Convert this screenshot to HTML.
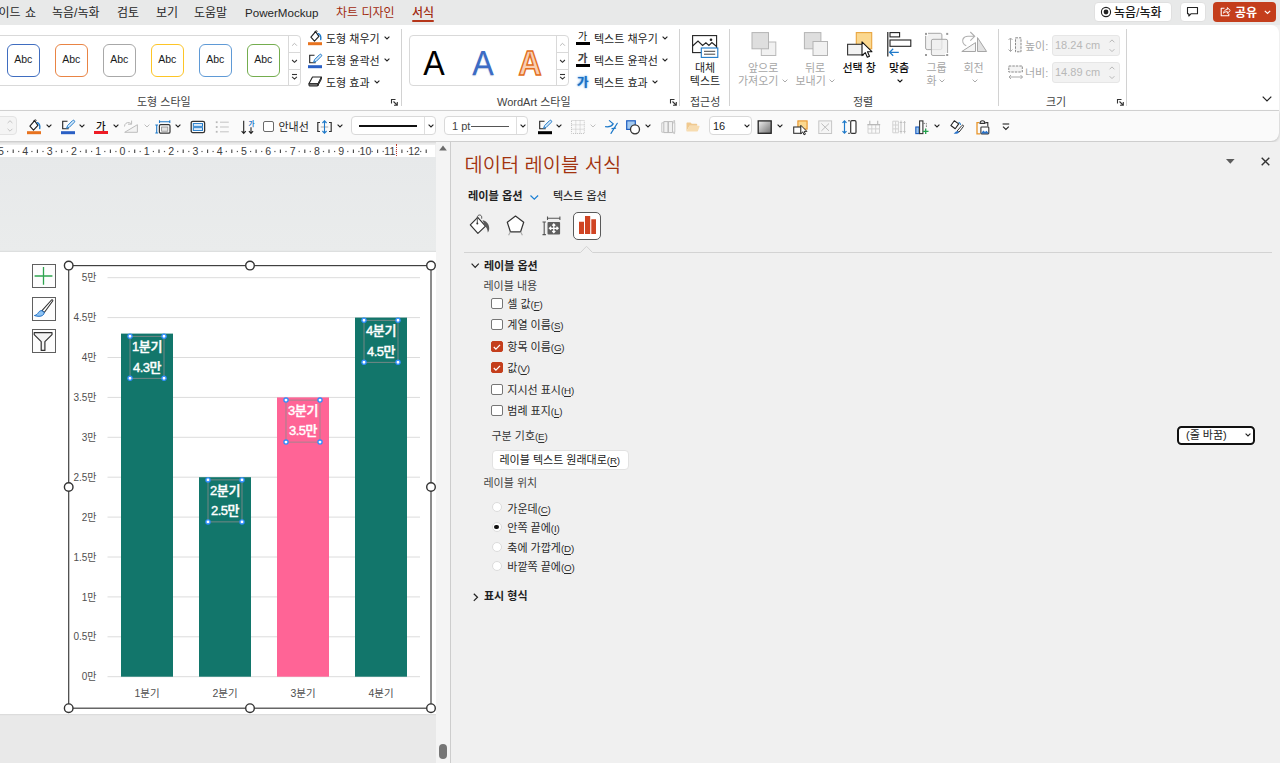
<!DOCTYPE html>
<html lang="ko">
<head>
<meta charset="utf-8">
<title>데이터 레이블 서식</title>
<style>
*{box-sizing:border-box}
html,body{margin:0;padding:0}
body{width:1280px;height:763px;overflow:hidden;position:relative;background:#f0f0f0;
 font-family:"Liberation Sans","Noto Sans CJK KR",sans-serif;font-size:12px;color:#242424;line-height:1}
.abs{position:absolute}
.t{position:absolute;white-space:nowrap;line-height:14px;height:14px}
svg{position:absolute;overflow:visible}
/* tab bar */
#tabs{position:absolute;left:0;top:0;width:1280px;height:25px;background:#e8e9e9}
#tabs .t{top:6px;font-size:12px;color:#262626}
/* ribbon */
#ribbon{position:absolute;left:-10px;top:25px;width:1289px;height:86px;background:#fff;border-radius:0 8px 0 0;border-bottom:1px solid #d6d6d6}
#qat{position:absolute;left:-10px;top:111px;width:1289px;height:30px;background:#fafafa;border-radius:0 0 8px 0;box-shadow:0 1px 3px rgba(0,0,0,.22)}
.sep{position:absolute;top:29px;width:1px;height:77px;background:#d2d2d2}
.glabel{position:absolute;top:95px;font-size:11px;color:#424242;white-space:nowrap;line-height:14px}
.rb{position:absolute;font-size:12px;color:#242424;white-space:nowrap;line-height:14px}
.dis{color:#a6a6a6}
.gal{position:absolute;top:35px;height:51px;background:#fff;border:1px solid #d9d9d9;border-radius:4px}
.abc{position:absolute;top:44px;width:32.500px;height:32.500px;border:1.500px solid;border-radius:6px;background:#fff;font-size:10.500px;text-align:center;line-height:29px;color:#1a1a1a}
/* qat */
.dd{position:absolute;top:116px;height:19px;background:#fff;border:1px solid #d9d9d9;border-radius:4px}
/* ruler */
#ruler{position:absolute;left:0;top:144.500px;width:435px;height:12.500px;background:#fff;overflow:hidden}
#ruler span{position:absolute;top:0;font-size:10.600px;line-height:12px;color:#404040;transform:translateX(-50%)}
/* slide area */
#work{position:absolute;left:0;top:157px;width:436px;height:606px;background:linear-gradient(#e7e9ea 0,#eaecec 95px,#e9e9e9 95px);overflow:hidden}
#slide{position:absolute;left:-10px;top:95px;width:456px;height:462px;background:#fff;box-shadow:0 0 2px rgba(0,0,0,.18)}
#vscroll{position:absolute;left:436px;top:142px;width:14px;height:621px;background:#f4f4f4}
/* pane */
#pane{position:absolute;left:450px;top:142px;width:830px;height:621px;background:#f0f0f0;border-left:1px solid #cdcdcd}
.pt{position:absolute;white-space:nowrap;font-size:11px;line-height:14px;height:14px;color:#2a2a2a}
.ak{font-size:9.800px;letter-spacing:-.2px}
.pt u{text-decoration-thickness:1px;text-underline-offset:1.5px}
.cb{position:absolute;left:491.300px;width:11.400px;height:11px;border:1px solid #767676;border-radius:2px;background:#fff}
.cb.on{background:#c43e1c;border-color:#c43e1c}
.rd{position:absolute;left:491.600px;width:10px;height:10px;border:1px solid #dcdcdc;border-radius:50%;background:#fff}
.ac{display:inline-block;border:1px solid #333;border-radius:50%;font-size:9px;line-height:10px;height:12px;min-width:11px;padding:0 1.5px;text-align:center;vertical-align:0px;margin:0 -0.5px}
</style>
</head>
<body>
<!-- ===== TAB BAR ===== -->
<div id="tabs">
 <div class="t" style="left:-1.500px;word-spacing:1px">이드 쇼</div>
 <div class="t" style="left:52px">녹음/녹화</div>
 <div class="t" style="left:117px">검토</div>
 <div class="t" style="left:156px">보기</div>
 <div class="t" style="left:194px">도움말</div>
 <div class="t" style="left:245px;font-size:11.6px">PowerMockup</div>
 <div class="t" style="left:336px;color:#a12b10">차트 디자인</div>
 <div class="t" style="left:412px;color:#a12b10;font-weight:500">서식</div>
 <div class="abs" style="left:412px;top:20px;width:22px;height:2px;background:#b5361a;border-radius:1px"></div>
 <!-- right buttons -->
 <div class="abs" style="left:1094px;top:2px;width:78px;height:20px;background:#fff;border:1px solid #e0e0e0;border-radius:4px"></div>
 <svg style="left:1100px;top:6px" width="12" height="12" viewBox="0 0 12 12"><circle cx="6" cy="6" r="4.6" fill="none" stroke="#222" stroke-width="1.1"/><circle cx="6" cy="6" r="2.4" fill="#222"/></svg>
 <div class="t" style="left:1114px;color:#1a1a1a;font-weight:500">녹음/녹화</div>
 <div class="abs" style="left:1180px;top:2px;width:26px;height:20px;background:#fff;border:1px solid #e0e0e0;border-radius:4px"></div>
 <svg style="left:1186px;top:6px" width="14" height="12" viewBox="0 0 14 12"><path d="M1.5 1.5h10v6.2h-6.3l-2.4 2.3v-2.3h-1.3z" fill="none" stroke="#222" stroke-width="1.1" stroke-linejoin="round"/></svg>
 <div class="abs" style="left:1213px;top:2px;width:63px;height:20px;background:#c43e1c;border-radius:4px"></div>
 <svg style="left:1219px;top:5px" width="13" height="13" viewBox="0 0 13 13"><path d="M5.5 3.2H2.2v7.6h7.6V8.4" fill="none" stroke="#fff" stroke-width="1.1" stroke-linejoin="round"/><path d="M4.6 8.2c.3-2.4 1.6-3.6 3.7-3.7V2.6l3 2.9-3 2.9V6.6C6.800 6.600 5.600 7.100 4.600 8.200z" fill="none" stroke="#fff" stroke-width="1" stroke-linejoin="round"/></svg>
 <div class="t" style="left:1235px;color:#fff;font-weight:700">공유</div>
 <svg style="left:1264px;top:10px" width="7" height="5" viewBox="0 0 7 5"><path d="M.8.9l2.7 2.600L6.200.9" fill="none" stroke="#fff" stroke-width="1.2"/></svg>
</div>

<!-- ===== RIBBON ===== -->
<div id="ribbon"></div>
<div id="qat"></div>
<!-- shape styles gallery -->
<div class="gal" style="left:-10px;width:311px"></div>
<div class="abs" style="left:288px;top:36px;width:1px;height:49px;background:#d9d9d9"></div>
<div class="abs" style="left:288px;top:52px;width:12px;height:1px;background:#d9d9d9"></div>
<div class="abs" style="left:288px;top:69px;width:12px;height:1px;background:#d9d9d9"></div>
<svg style="left:291px;top:41.500px" width="7" height="5" viewBox="0 0 7 5"><path d="M1.100 3.700l2.400-2.400 2.400 2.400" fill="none" stroke="#b9b9b9" stroke-width="1"/></svg>
<svg style="left:291px;top:59px" width="7" height="5" viewBox="0 0 7 5"><path d="M1.100 1l2.400 2.300L5.900 1" fill="none" stroke="#333" stroke-width="1.100"/></svg>
<svg style="left:291px;top:73px" width="7" height="8" viewBox="0 0 7 8"><path d="M1 1.500h5" stroke="#333" stroke-width="1.100"/><path d="M1.100 3.800l2.400 2.300 2.400-2.300" fill="none" stroke="#333" stroke-width="1.100"/></svg>
<div class="abc" style="left:7px;border-color:#3f6dc0">Abc</div>
<div class="abc" style="left:55px;border-color:#e98444">Abc</div>
<div class="abc" style="left:103px;border-color:#a8a8a8">Abc</div>
<div class="abc" style="left:151px;border-color:#fdc527">Abc</div>
<div class="abc" style="left:199px;border-color:#5f9ad6">Abc</div>
<div class="abc" style="left:247px;border-color:#74ad4e">Abc</div>
<div class="glabel" style="left:137px">도형 스타일</div>
<!-- shape fill / outline / effects -->
<svg style="left:308px;top:30px" width="15" height="16" viewBox="0 0 15 16"><path d="M7.600 1.700L2.900 7.200l3.600 3.900 4.400-4.700z" fill="#fff" stroke="#222" stroke-width="1.150" stroke-linejoin="round"/><path d="M6.600 3c-.2-1.700 1.600-2.800 2.900-1.600" fill="none" stroke="#222" stroke-width="1"/><path d="M10.300 3.700c1.900 1 2.900 3.100 2.400 5.800" fill="none" stroke="#1e79c9" stroke-width="1.400" stroke-linecap="round"/><rect x="0" y="12.200" width="14" height="3" fill="#e8731f"/></svg>
<div class="rb" style="left:326px;top:32px;font-size:11px">도형 채우기</div>
<svg style="left:384px;top:36px" width="6" height="4" viewBox="0 0 6 4"><path d="M.6.6L3 3 5.400.6" fill="none" stroke="#222" stroke-width="1.100"/></svg>
<svg style="left:308px;top:53px" width="15" height="16" viewBox="0 0 15 16"><path d="M6.500 2.300H1.700v7.400h6" fill="none" stroke="#222" stroke-width="1.100"/><path d="M5.600 9.300l1-2.700 5-5c.5-.5 1.300-.5 1.700 0 .5.500.5 1.200 0 1.700l-5 5z" fill="#d6e9fa" stroke="#1e79c9" stroke-width="1" stroke-linejoin="round"/><rect x="0" y="12.200" width="14" height="3" fill="#2a5fc4"/></svg>
<div class="rb" style="left:326px;top:54px;font-size:11px">도형 윤곽선</div>
<svg style="left:384px;top:58px" width="6" height="4" viewBox="0 0 6 4"><path d="M.6.6L3 3 5.400.6" fill="none" stroke="#222" stroke-width="1.100"/></svg>
<svg style="left:308px;top:76px" width="15" height="12" viewBox="0 0 15 12"><path d="M4.500 1h9l-3.400 6.800H.9z" fill="#fff" stroke="#222" stroke-width="1.100" stroke-linejoin="round"/><path d="M.9 7.800l.3 2.200h8.500l.4-2.200z" fill="#8a8a8a" stroke="#222" stroke-width="1" stroke-linejoin="round"/><path d="M9.700 10l3.500-6.500.3-2.500-3.400 6.800z" fill="#cfcfcf" stroke="#222" stroke-width="1" stroke-linejoin="round"/></svg>
<div class="rb" style="left:326px;top:76px;font-size:11px">도형 효과</div>
<svg style="left:374px;top:80px" width="6" height="4" viewBox="0 0 6 4"><path d="M.6.6L3 3 5.400.6" fill="none" stroke="#222" stroke-width="1.100"/></svg>
<svg class="launch" style="left:391px;top:99px" width="7" height="7" viewBox="0 0 7 7"><path d="M.5 4.500V.5h4" fill="none" stroke="#333" stroke-width="1.100"/><path d="M2.500 2.500l3.500 3.500M6.300 3v3.300H3" fill="none" stroke="#333" stroke-width="1.100"/></svg>
<div class="sep" style="left:401px"></div>
<!-- wordart gallery -->
<div class="gal" style="left:409px;width:160px"></div>
<div class="abs" style="left:556px;top:36px;width:1px;height:49px;background:#d9d9d9"></div>
<div class="abs" style="left:556px;top:52px;width:12px;height:1px;background:#d9d9d9"></div>
<div class="abs" style="left:556px;top:69px;width:12px;height:1px;background:#d9d9d9"></div>
<svg style="left:559px;top:41.500px" width="7" height="5" viewBox="0 0 7 5"><path d="M1.100 3.700l2.400-2.400 2.400 2.400" fill="none" stroke="#b9b9b9" stroke-width="1"/></svg>
<svg style="left:559px;top:59px" width="7" height="5" viewBox="0 0 7 5"><path d="M1.100 1l2.400 2.300L5.900 1" fill="none" stroke="#333" stroke-width="1.100"/></svg>
<svg style="left:559px;top:73px" width="7" height="8" viewBox="0 0 7 8"><path d="M1 1.500h5" stroke="#333" stroke-width="1.100"/><path d="M1.100 3.800l2.400 2.300 2.400-2.300" fill="none" stroke="#333" stroke-width="1.100"/></svg>
<div class="abs" style="left:421px;top:45px;width:26px;font-size:35px;line-height:36px;color:#000;text-align:center;transform:scaleX(.92)">A</div>
<div class="abs" style="left:470px;top:45px;width:26px;font-size:35px;line-height:36px;color:#3c6cc5;text-align:center;transform:scaleX(.92);text-shadow:0 1px 1px rgba(60,90,160,.35)">A</div>
<div class="abs" style="left:517px;top:44.500px;width:26px;font-size:35.500px;line-height:36px;color:#f9cfb3;text-align:center;font-weight:700;transform:scaleX(.9);-webkit-text-stroke:1.500px #e26d20">A</div>
<div class="glabel" style="left:497px">WordArt 스타일</div>
<!-- text fill/outline/effects -->
<div class="rb" style="left:578px;top:30px;font-size:10px;color:#111">가</div>
<div class="abs" style="left:576px;top:42.300px;width:14px;height:2.800px;background:#000"></div>
<div class="rb" style="left:594px;top:32px;font-size:11px">텍스트 채우기</div>
<svg style="left:662px;top:36px" width="6" height="4" viewBox="0 0 6 4"><path d="M.6.6L3 3 5.400.6" fill="none" stroke="#222" stroke-width="1.100"/></svg>
<div class="rb" style="left:578px;top:52px;font-size:10px;color:#fff;-webkit-text-stroke:.6px #111">가</div>
<div class="abs" style="left:576px;top:64.300px;width:14px;height:2.800px;background:#000"></div>
<div class="rb" style="left:594px;top:54px;font-size:11px">텍스트 윤곽선</div>
<svg style="left:662px;top:58px" width="6" height="4" viewBox="0 0 6 4"><path d="M.6.6L3 3 5.400.6" fill="none" stroke="#222" stroke-width="1.100"/></svg>
<div class="rb" style="left:577px;top:75.5px;font-size:12.5px;font-weight:700;color:#1b6fc2;text-shadow:0 0 2.500px #5aa5ea,0 0 1px #5aa5ea">가</div>
<div class="rb" style="left:594px;top:76px;font-size:11px">텍스트 효과</div>
<svg style="left:652px;top:80px" width="6" height="4" viewBox="0 0 6 4"><path d="M.6.6L3 3 5.400.6" fill="none" stroke="#222" stroke-width="1.100"/></svg>
<svg class="launch" style="left:670px;top:99px" width="7" height="7" viewBox="0 0 7 7"><path d="M.5 4.500V.5h4" fill="none" stroke="#333" stroke-width="1.100"/><path d="M2.500 2.500l3.500 3.500M6.300 3v3.300H3" fill="none" stroke="#333" stroke-width="1.100"/></svg>
<div class="sep" style="left:679px"></div>

<!-- alt text -->
<svg style="left:692px;top:35px" width="28" height="26" viewBox="0 0 28 26"><rect x=".6" y=".6" width="24" height="17" fill="#fff" stroke="#222" stroke-width="1.100"/><path d="M.6 11l5.400-5 4.600 4.400 3.300-2.600 3 2.600 3-2.900 4.700 4" fill="none" stroke="#222" stroke-width="1.100"/><circle cx="19" cy="4.700" r="1.300" fill="#222"/><rect x="9.300" y="13" width="16.500" height="9.400" fill="#fff" stroke="#1e79c9" stroke-width="1.100"/><path d="M12 16.300h11.200M12 19.200h11.200" stroke="#444" stroke-width="1"/></svg>
<div class="rb" style="left:692px;top:60.500px;width:26px;text-align:center;font-size:11px">대체</div>
<div class="rb" style="left:689px;top:74px;width:32px;text-align:center;font-size:11px">텍스트</div>
<div class="glabel" style="left:690px">접근성</div>
<div class="sep" style="left:729px"></div>
<!-- bring forward -->
<svg style="left:751px;top:32px" width="26" height="25" viewBox="0 0 26 25"><rect x="10.300" y="10" width="14.500" height="13.500" fill="#f1f1f1" stroke="#b9b9b9" stroke-width="1"/><rect x="1" y=".6" width="16.500" height="16.200" fill="#dedede" stroke="#b4b4b4" stroke-width="1"/></svg>
<div class="rb dis" style="left:748px;top:60.500px;font-size:11px">앞으로</div>
<div class="rb dis" style="left:738px;top:74px;font-size:11px">가져오기</div>
<svg style="left:782px;top:79px" width="6" height="4" viewBox="0 0 6 4"><path d="M.6.6L3 3 5.400.6" fill="none" stroke="#ababab" stroke-width="1"/></svg>
<!-- send backward -->
<svg style="left:803px;top:32px" width="26" height="25" viewBox="0 0 26 25"><rect x="1.400" y=".6" width="16.500" height="16.200" fill="#dedede" stroke="#b4b4b4" stroke-width="1"/><rect x="10" y="9.500" width="14.500" height="14" fill="#f1f1f1" stroke="#b4b4b4" stroke-width="1"/></svg>
<div class="rb dis" style="left:805px;top:60.500px;font-size:11px">뒤로</div>
<div class="rb dis" style="left:795.500px;top:74px;font-size:11px">보내기</div>
<svg style="left:829px;top:79px" width="6" height="4" viewBox="0 0 6 4"><path d="M.6.6L3 3 5.400.6" fill="none" stroke="#ababab" stroke-width="1"/></svg>
<!-- selection pane -->
<svg style="left:847px;top:32px" width="27" height="26" viewBox="0 0 27 26"><rect x="9.300" y=".6" width="15.400" height="16.200" fill="#fbd88f" stroke="#e9a53e" stroke-width="1.100"/><rect x=".6" y="12.300" width="15.800" height="10.600" fill="#f3f3f3" stroke="#333" stroke-width="1.100"/><path d="M15 9.800v13.800l3.300-3 2 4.600 2.200-1-2-4.500h4.400z" fill="#fff" stroke="#111" stroke-width="1.100" stroke-linejoin="round"/></svg>
<div class="rb" style="left:842.500px;top:60.500px;font-size:11px;font-weight:500;color:#111">선택 창</div>
<!-- align -->
<svg style="left:887px;top:32px" width="25" height="25" viewBox="0 0 25 25"><path d="M.8 0v24.500" stroke="#222" stroke-width="1.200"/><rect x="3" y=".6" width="9.600" height="4.300" fill="#fff" stroke="#222" stroke-width="1.100"/><rect x="3" y="8" width="20.800" height="6.300" fill="#fff" stroke="#222" stroke-width="1.100"/><path d="M11.800 20.300H2.600M6.200 16.800l-3.600 3.500 3.600 3.500" fill="none" stroke="#1e79c9" stroke-width="1.200"/></svg>
<div class="rb" style="left:889px;top:60.500px;font-size:11px;font-weight:500;color:#111">맞춤</div>
<svg style="left:897px;top:79px" width="6" height="4" viewBox="0 0 6 4"><path d="M.6.6L3 3 5.400.6" fill="none" stroke="#111" stroke-width="1.200"/></svg>
<!-- group -->
<svg style="left:924px;top:32px" width="25" height="25" viewBox="0 0 25 25"><rect x="1.600" y="1.300" width="16.300" height="16.300" rx="1.600" fill="#f1f1f1" stroke="#a6a6a6" stroke-width="1"/><rect x="7.400" y="7.300" width="16.200" height="16.200" rx="1.600" fill="#ededed" fill-opacity=".75" stroke="#a6a6a6" stroke-width="1"/><g fill="#fff"><rect x="0" y="0" width="4" height="3.800"/><rect x="21.200" y="21" width="4" height="4"/></g><g fill="#9a9a9a"><rect x="1" y=".9" width="2" height="2"/><rect x="22.200" y=".9" width="2" height="2"/><rect x="1" y="22" width="2" height="2"/><rect x="22.200" y="22" width="2" height="2"/></g></svg>
<div class="rb dis" style="left:926.500px;top:60.500px;font-size:11px">그룹</div>
<div class="rb dis" style="left:926.500px;top:74px;font-size:11px">화</div>
<svg style="left:939px;top:79px" width="6" height="4" viewBox="0 0 6 4"><path d="M.6.6L3 3 5.400.6" fill="none" stroke="#ababab" stroke-width="1"/></svg>
<!-- rotate -->
<svg style="left:961px;top:31px" width="27" height="22" viewBox="0 0 27 22"><path d="M.8 20.500h13.700V11.600z" fill="#f4f4f4" stroke="#a6a6a6" stroke-width="1" stroke-linejoin="round"/><path d="M16.500 6.600v13.900h9.100z" fill="#e2e2e2" stroke="#a6a6a6" stroke-width="1" stroke-linejoin="round"/><path d="M5.250 14.700C2 13.500.8 10 2.200 7.600 3.200 5.800 5 5.300 7 5.300h6.700M9.300 1l4.400 4.300-4.400 4.400" fill="none" stroke="#b0b0b0" stroke-width="1.100"/></svg>
<div class="rb dis" style="left:963.500px;top:60.500px;font-size:11px">회전</div>
<svg style="left:972px;top:79px" width="6" height="4" viewBox="0 0 6 4"><path d="M.6.6L3 3 5.400.6" fill="none" stroke="#ababab" stroke-width="1"/></svg>
<div class="glabel" style="left:853px">정렬</div>
<div class="sep" style="left:998px"></div>
<!-- size -->
<svg style="left:1008px;top:37px" width="15" height="16" viewBox="0 0 15 16"><path d="M2.500 1v13.500M.5 3l2-2 2 2M.5 12.500l2 2 2-2" fill="none" stroke="#a9a9a9" stroke-width="1"/><rect x="7.500" y=".8" width="5.500" height="14" fill="#f4f4f4" stroke="#8a8a8a" stroke-width="1" stroke-dasharray="2.500 1"/></svg>
<div class="rb dis" style="left:1025px;top:38.500px;font-size:11px">높이:</div>
<div class="abs" style="left:1052px;top:35px;width:68px;height:21px;background:#f2f2f2;border:1px solid #e6e6e6;border-radius:3px"></div>
<div class="rb" style="left:1055px;top:37.500px;font-size:11px;color:#b8b8b8">18.24 cm</div>
<svg style="left:1109px;top:39px" width="6" height="14" viewBox="0 0 6 14"><path d="M.6 3.300L3 .9l2.400 2.400M.6 10.200l2.400 2.400 2.400-2.400" fill="none" stroke="#b9b9b9" stroke-width="1"/></svg>
<svg style="left:1008px;top:65px" width="16" height="15" viewBox="0 0 16 15"><rect x=".8" y="1" width="13.500" height="6" fill="#f4f4f4" stroke="#8a8a8a" stroke-width="1" stroke-dasharray="2.500 1"/><path d="M1 12h13.500M3 10l-2 2 2 2M12.500 10l2 2-2 2" fill="none" stroke="#a9a9a9" stroke-width="1"/></svg>
<div class="rb dis" style="left:1025px;top:65.500px;font-size:11px">너비:</div>
<div class="abs" style="left:1052px;top:62px;width:68px;height:21px;background:#f2f2f2;border:1px solid #e6e6e6;border-radius:3px"></div>
<div class="rb" style="left:1055px;top:64.500px;font-size:11px;color:#b8b8b8">14.89 cm</div>
<svg style="left:1109px;top:66px" width="6" height="14" viewBox="0 0 6 14"><path d="M.6 3.300L3 .9l2.400 2.400M.6 10.200l2.400 2.400 2.400-2.400" fill="none" stroke="#b9b9b9" stroke-width="1"/></svg>
<div class="glabel" style="left:1046px">크기</div>
<svg class="launch" style="left:1117px;top:99px" width="7" height="7" viewBox="0 0 7 7"><path d="M.5 4.500V.5h4" fill="none" stroke="#333" stroke-width="1.100"/><path d="M2.500 2.500l3.500 3.500M6.300 3v3.300H3" fill="none" stroke="#333" stroke-width="1.100"/></svg>
<div class="sep" style="left:1126px"></div>
<svg style="left:1262px;top:96px" width="10" height="6" viewBox="0 0 10 6"><path d="M.7.7L5 5 9.300.7" fill="none" stroke="#222" stroke-width="1.200"/></svg>


<!-- spinner stub -->
<div class="abs" style="left:-10px;top:116px;width:27px;height:19px;background:#f4f4f4;border:1px solid #e3e3e3;border-radius:4px"></div>
<svg style="left:7px;top:120px" width="6" height="12" viewBox="0 0 6 12"><path d="M.6 3L3 .7l2.400 2.300M.6 8.800l2.400 2.400 2.400-2.400" fill="none" stroke="#c4c4c4" stroke-width="1"/></svg>
<!-- fill -->
<svg style="left:27px;top:119px" width="15" height="16" viewBox="0 0 15 16"><path d="M7.600 1.700L2.900 7.200l3.600 3.900 4.400-4.700z" fill="#fff" stroke="#222" stroke-width="1.150" stroke-linejoin="round"/><path d="M6.600 3c-.2-1.700 1.600-2.800 2.900-1.600" fill="none" stroke="#222" stroke-width="1"/><path d="M10.300 3.700c1.900 1 2.900 3.100 2.400 5.800" fill="none" stroke="#1e79c9" stroke-width="1.400" stroke-linecap="round"/><rect x="0" y="12.200" width="14" height="3" fill="#e8731f"/></svg>
<svg class="chv" style="left:46px;top:124px" width="6" height="4" viewBox="0 0 6 4"><path d="M.6.6L3 3 5.400.6" fill="none" stroke="#222" stroke-width="1.100"/></svg>
<!-- outline -->
<svg style="left:61px;top:119px" width="15" height="16" viewBox="0 0 15 16"><path d="M6.500 2.300H1.700v7.400h6" fill="none" stroke="#222" stroke-width="1.100"/><path d="M5.600 9.300l1-2.700 5-5c.5-.5 1.300-.5 1.700 0 .5.500.5 1.200 0 1.700l-5 5z" fill="#d6e9fa" stroke="#1e79c9" stroke-width="1" stroke-linejoin="round"/><rect x="0" y="12.200" width="14" height="3" fill="#2a5fc4"/></svg>
<svg class="chv" style="left:79px;top:124px" width="6" height="4" viewBox="0 0 6 4"><path d="M.6.6L3 3 5.400.6" fill="none" stroke="#222" stroke-width="1.100"/></svg>
<!-- font color -->
<div class="rb" style="left:96px;top:118.500px;font-size:10.500px;color:#111;font-weight:500">가</div>
<div class="abs" style="left:94px;top:131px;width:14px;height:3px;background:#ee1c25"></div>
<svg class="chv" style="left:112.500px;top:124px" width="6" height="4" viewBox="0 0 6 4"><path d="M.6.6L3 3 5.400.6" fill="none" stroke="#222" stroke-width="1.100"/></svg>
<!-- rotate gray -->
<svg style="left:123px;top:120px" width="16" height="14" viewBox="0 0 16 14"><path d="M14.400 12.300H1.700L14.400 4.700z" fill="#f3f3f3" stroke="#bdbdbd" stroke-width="1" stroke-linejoin="round"/><path d="M1.500 6.500C1.400 3.700 4 2 6.300 2.700c.7.200 1.300.6 1.900 1.200M8.600.6v3.600H5" fill="none" stroke="#bdbdbd" stroke-width="1"/></svg>
<svg class="chv" style="left:143.500px;top:124px" width="6" height="4" viewBox="0 0 6 4"><path d="M.6.6L3 3 5.400.6" fill="none" stroke="#bdbdbd" stroke-width="1"/></svg>
<!-- frame size -->
<svg style="left:155px;top:120px" width="16" height="14" viewBox="0 0 16 14"><path d="M4.500 1.700h10.300M4.500.3v2.800M14.800.3v2.800" stroke="#1e79c9" stroke-width="1.100" fill="none"/><path d="M1.700 5v8M.3 5h2.800M.3 13h2.800" stroke="#1e79c9" stroke-width="1.100" fill="none"/><rect x="4.400" y="4.700" width="10.600" height="8.500" rx="1.300" fill="#fff" stroke="#333" stroke-width="1.200"/><rect x="6.600" y="7" width="6.200" height="4.200" fill="#e3e3e3" stroke="#8a8a8a" stroke-width=".8"/></svg>
<svg class="chv" style="left:175px;top:124px" width="6" height="4" viewBox="0 0 6 4"><path d="M.6.6L3 3 5.400.6" fill="none" stroke="#222" stroke-width="1.100"/></svg>
<!-- blue rows -->
<svg style="left:190px;top:120px" width="16" height="14" viewBox="0 0 16 14"><rect x="1.200" y="1.300" width="13.400" height="11.300" rx="1.600" fill="#fff" stroke="#333" stroke-width="1.300"/><rect x="3.300" y="3.600" width="9.200" height="2.700" fill="#f4f9fe" stroke="#1e79c9" stroke-width="1"/><rect x="3.300" y="7.700" width="9.200" height="2.700" fill="#f4f9fe" stroke="#1e79c9" stroke-width="1"/></svg>
<!-- list gray -->
<svg style="left:215px;top:120px" width="15" height="14" viewBox="0 0 15 14"><g fill="#b9b9b9"><rect x=".8" y="1.300" width="1.800" height="1.800"/><rect x=".8" y="6.100" width="1.800" height="1.800"/><rect x=".8" y="10.900" width="1.800" height="1.800"/></g><path d="M5 2.200h8.800M5 7h8.800M5 11.800h8.800" stroke="#c3c3c3" stroke-width="1"/></svg>
<!-- sort -->
<svg style="left:241px;top:120px" width="14" height="15" viewBox="0 0 14 15"><path d="M2.700.8v12.600M.6 11.200l2.100 2.200 2.100-2.200M10 7.300v6.100M7.900 11.200L10 13.400l2.100-2.200" fill="none" stroke="#222" stroke-width="1.100"/><text x="7.400" y="5.800" font-size="6.500" font-weight="700" fill="#1e79c9" font-family="'Liberation Sans','Noto Sans CJK KR',sans-serif">가</text></svg>
<!-- guides checkbox -->
<div class="abs" style="left:263px;top:121px;width:11px;height:11px;border:1px solid #6a6a6a;border-radius:2px;background:#fff"></div>
<div class="rb" style="left:278.500px;top:120px;font-size:11px">안내선</div>
<!-- bracket arrows -->
<svg style="left:317px;top:120px" width="15" height="14" viewBox="0 0 15 14"><path d="M3 2.500H.8v9H3M12 2.500h2.200v9H12" fill="none" stroke="#333" stroke-width="1.200"/><path d="M3.800 7h7.400" stroke="#b5b5b5" stroke-width="1.200"/><path d="M7.500.9v12.200M5.400 3L7.500.9 9.600 3M5.400 11l2.100 2.100L9.600 11" fill="none" stroke="#1e79c9" stroke-width="1.100"/></svg>
<svg class="chv" style="left:337px;top:124px" width="6" height="4" viewBox="0 0 6 4"><path d="M.6.6L3 3 5.400.6" fill="none" stroke="#222" stroke-width="1.100"/></svg>
<!-- line style dd -->
<div class="dd" style="left:351px;width:85px"></div>
<div class="abs" style="left:424px;top:117px;width:1px;height:17px;background:#dedede"></div>
<div class="abs" style="left:359px;top:125px;width:58px;height:1.500px;background:#111"></div>
<svg class="chv" style="left:427.500px;top:124px" width="6" height="4" viewBox="0 0 6 4"><path d="M.6.6L3 3 5.400.6" fill="none" stroke="#222" stroke-width="1.100"/></svg>
<!-- weight dd -->
<div class="dd" style="left:444px;width:84px"></div>
<div class="abs" style="left:516px;top:117px;width:1px;height:17px;background:#dedede"></div>
<div class="rb" style="left:452px;top:119px;font-size:11px;color:#444">1 pt</div>
<div class="abs" style="left:471px;top:125.500px;width:38px;height:1px;background:#555"></div>
<svg class="chv" style="left:519.500px;top:124px" width="6" height="4" viewBox="0 0 6 4"><path d="M.6.6L3 3 5.400.6" fill="none" stroke="#222" stroke-width="1.100"/></svg>
<!-- pen outline black -->
<svg style="left:537.500px;top:119px" width="15" height="16" viewBox="0 0 15 16"><path d="M6.500 2.300H1.700v7.400h6" fill="none" stroke="#222" stroke-width="1.100"/><path d="M5.600 9.300l1-2.700 5-5c.5-.5 1.300-.5 1.700 0 .5.500.5 1.200 0 1.700l-5 5z" fill="#d6e9fa" stroke="#1e79c9" stroke-width="1" stroke-linejoin="round"/><rect x="0" y="12.200" width="14" height="3" fill="#000"/></svg>
<svg class="chv" style="left:556px;top:124px" width="6" height="4" viewBox="0 0 6 4"><path d="M.6.6L3 3 5.400.6" fill="none" stroke="#222" stroke-width="1.100"/></svg>
<!-- dotted grid gray -->
<svg style="left:571px;top:120px" width="14" height="14" viewBox="0 0 14 14"><path d="M.5.500h12.800v13H.5zM.5 4.800h12.800M.5 9.200h12.800M4.800.5v13M9.100.5v13" fill="none" stroke="#c2c2c2" stroke-width="1" stroke-dasharray="1 1"/></svg>
<svg class="chv" style="left:589.500px;top:124px" width="6" height="4" viewBox="0 0 6 4"><path d="M.6.6L3 3 5.400.6" fill="none" stroke="#c0c0c0" stroke-width="1"/></svg>
<!-- blue scissor-like -->
<svg style="left:605px;top:120px" width="14" height="14" viewBox="0 0 14 14"><path d="M.6 6.700c3.300.4 6-.3 7.600-2.800L4.400.6" fill="none" stroke="#1e79c9" stroke-width="1.200" stroke-linecap="round"/><path d="M12.300 3.300L6 13.400" stroke="#1e79c9" stroke-width="1.200" stroke-linecap="round"/><path d="M7 8.700l3.600-.5" stroke="#1e79c9" stroke-width="1.200" stroke-linecap="round"/></svg>
<!-- shapes -->
<svg style="left:626px;top:120px" width="15" height="15" viewBox="0 0 15 15"><rect x=".7" y=".8" width="8.600" height="8.600" fill="#a4caf0" stroke="#1d5dc0" stroke-width="1.200"/><circle cx="9" cy="9.300" r="4.500" fill="#fff" stroke="#333" stroke-width="1.300"/></svg>
<svg class="chv" style="left:645px;top:124px" width="6" height="4" viewBox="0 0 6 4"><path d="M.6.6L3 3 5.400.6" fill="none" stroke="#222" stroke-width="1.100"/></svg>
<!-- gray book -->
<svg style="left:660.500px;top:120px" width="15" height="14" viewBox="0 0 15 14"><path d="M2.800 1.600h4.400v11H2.800zM7.200 1.600h4.400v11H7.200z" fill="#f1f1f1" stroke="#b9b9b9" stroke-width="1"/><path d="M2.800 2.800H.8v9.400h2M11.600 2.800h2.200v9.400h-2.200M11.600 1.600l2-1.100v2.300M11.600 12.600l2 1v-1.400" fill="none" stroke="#c4c4c4" stroke-width="1"/></svg>
<!-- folder -->
<svg style="left:686px;top:122px" width="14" height="10" viewBox="0 0 14 10"><path d="M.5 9.300V1.200c0-.4.300-.7.700-.7h3.300l1.300 1.300h4.700c.4 0 .7.300.7.700v1.200H3.600L.5 9.300z" fill="#f0c98f"/><path d="M3.400 3.700h9.700c.4 0 .6.400.5.700l-1.700 4.500c-.1.300-.4.500-.7.500H.5z" fill="#f7dcb0"/></svg>
<!-- font size dd -->
<div class="dd" style="left:709px;width:43px"></div>
<div class="rb" style="left:713px;top:119px;font-size:11px;color:#222">16</div>
<svg class="chv" style="left:743.500px;top:124px" width="6" height="4" viewBox="0 0 6 4"><path d="M.6.6L3 3 5.400.6" fill="none" stroke="#222" stroke-width="1.100"/></svg>
<!-- gradient square -->
<svg style="left:757px;top:120px" width="15" height="14" viewBox="0 0 15 14"><defs><linearGradient id="gq" x1="0" y1="0" x2="1" y2="1"><stop offset="0" stop-color="#f2f2f2"/><stop offset="1" stop-color="#6f6f6f"/></linearGradient></defs><rect x="1.200" y=".9" width="13" height="12.400" fill="url(#gq)" stroke="#222" stroke-width="1.300"/></svg>
<svg class="chv" style="left:777px;top:124px" width="6" height="4" viewBox="0 0 6 4"><path d="M.6.6L3 3 5.400.6" fill="none" stroke="#222" stroke-width="1.100"/></svg>
<!-- selection pane small -->
<svg style="left:792.500px;top:120px" width="15" height="15" viewBox="0 0 15 15"><rect x="4.900" y=".9" width="9.200" height="8.200" fill="#fbd88f" stroke="#e8952a" stroke-width="1.100"/><rect x=".7" y="7" width="7.600" height="6.300" fill="#fff" stroke="#333" stroke-width="1.100"/><path d="M7.800 5.300v8.400l2-1.800 1.200 2.900 1.400-.6-1.200-2.800h2.700z" fill="#fff" stroke="#111" stroke-width=".9" stroke-linejoin="round"/></svg>
<!-- x box gray -->
<svg style="left:817.500px;top:120px" width="15" height="15" viewBox="0 0 15 15"><rect x=".8" y=".9" width="12.800" height="12.600" fill="#f5f5f5" stroke="#c6c6c6" stroke-width="1"/><path d="M3.400 3.500l7.600 7.400M11 3.500l-7.600 7.400" stroke="#bdbdbd" stroke-width="1"/></svg>
<!-- height blue -->
<svg style="left:842px;top:120px" width="15" height="14" viewBox="0 0 15 14"><path d="M2.500.9v12.300M.5 2.900l2-2 2 2M.5 11.200l2 2 2-2" fill="none" stroke="#1e79c9" stroke-width="1.200"/><path d="M6 .8h2M6 13.300h2" stroke="#555" stroke-width="1"/><rect x="8.700" y=".7" width="5.300" height="12.700" rx="1.200" fill="#fff" stroke="#333" stroke-width="1.200"/></svg>
<!-- gray rows -->
<svg style="left:867px;top:120px" width="14" height="14" viewBox="0 0 14 14"><path d="M1 4.700h11.500v8.500H1zM1 8.900h11.500M4.800 4.700v8.500M8.700 4.700v8.500" fill="none" stroke="#d2d2d2" stroke-width="1"/><path d="M.4 4.600h12.800M2.800.8v3.800M10.700.8v3.800" stroke="#b9b9b9" stroke-width="1.100"/></svg>
<!-- gray cols -->
<svg style="left:891.500px;top:120px" width="14" height="14" viewBox="0 0 14 14"><path d="M.8 1.200h5.600v11.600H.8zM.8 5h5.600M.8 8.900h5.600M3.600 1.200v11.600" fill="none" stroke="#d2d2d2" stroke-width="1"/><path d="M9 .6v13M12.600 1v12.400M7.700 2.500h2.600M11.300 2.500h2.200M7.700 11.500h2.600M11.300 11.500h2.200" stroke="#c0c0c0" stroke-width="1"/></svg>
<!-- chart add -->
<svg style="left:914.500px;top:120px" width="15" height="15" viewBox="0 0 15 15"><rect x=".8" y="7" width="3.300" height="6.600" fill="#9cc7ef" stroke="#1d5dc0" stroke-width="1.100"/><rect x="4.600" y=".9" width="3.300" height="12.700" fill="#fff" stroke="#333" stroke-width="1.100"/><path d="M8.400 3.400h3v4.400" fill="none" stroke="#777" stroke-width="1" stroke-dasharray="1.500 1"/><path d="M10.700 8.500v5.600M7.900 11.300h5.600" stroke="#22a04b" stroke-width="1.300"/></svg>
<svg class="chv" style="left:933.500px;top:124px" width="6" height="4" viewBox="0 0 6 4"><path d="M.6.6L3 3 5.400.6" fill="none" stroke="#222" stroke-width="1.100"/></svg>
<!-- format painter-ish -->
<svg style="left:949.500px;top:120px" width="15" height="15" viewBox="0 0 15 15"><path d="M4.300.8L.9 5.500l4.300 3.200 3.500-4.800z" fill="#fff" stroke="#222" stroke-width="1.100" stroke-linejoin="round"/><path d="M8.600 2.300c1.200.4 1.900 1.300 2 2.600" fill="none" stroke="#1e79c9" stroke-width="1.100"/><path d="M13.200 5.300c.4.300.5.800.2 1.200L9 12.200l-1.800-1.300 4.800-5.500c.3-.4.800-.4 1.200-.1z" fill="#fff" stroke="#333" stroke-width="1"/><path d="M7.200 10.900L9 12.200c-1 1.600-3.500 2-5.400 1.300 1.300-.4 1.700-2.300 3.600-2.600z" fill="#2a73c9"/></svg>
<!-- clipboard pic -->
<svg style="left:975.500px;top:120px" width="14" height="15" viewBox="0 0 14 15"><path d="M3.300 2.600H1v11.200h3.400" fill="none" stroke="#e8952a" stroke-width="1.300"/><path d="M9.300 2.600h2.500v3.800" fill="none" stroke="#333" stroke-width="1.100"/><path d="M4 3.400c0-1.200.7-2.600 2.400-2.600s2.500 1.400 2.500 2.600z" fill="#fff" stroke="#333" stroke-width="1.100" stroke-linejoin="round"/><rect x="4.900" y="7" width="7.900" height="6.900" rx=".8" fill="#fff" stroke="#333" stroke-width="1.100"/><path d="M5.400 12.700l2-2.300 1.600 1.500 1.400-1.100 2 1.900v.7H5.400z" fill="#2a73c9"/></svg>
<!-- overflow -->
<svg style="left:1002px;top:123px" width="8" height="8" viewBox="0 0 8 8"><path d="M.6 1h6.600" stroke="#222" stroke-width="1.100"/><path d="M1 3.700l2.900 2.700 2.900-2.700" fill="none" stroke="#222" stroke-width="1.100"/></svg>

<div id="ruler">
<span style="left:1.0px">5</span>
<span style="left:25.3px">4</span>
<span style="left:49.6px">3</span>
<span style="left:73.9px">2</span>
<span style="left:98.2px">1</span>
<span style="left:122.5px">0</span>
<span style="left:146.8px">1</span>
<span style="left:171.1px">2</span>
<span style="left:195.4px">3</span>
<span style="left:219.7px">4</span>
<span style="left:244.0px">5</span>
<span style="left:268.3px">6</span>
<span style="left:292.6px">7</span>
<span style="left:316.9px">8</span>
<span style="left:341.2px">9</span>
<span style="left:365.5px">10</span>
<span style="left:389.8px">11</span>
<span style="left:414.1px">12</span>
<svg style="left:0;top:0" width="433" height="14" viewBox="0 .5 433 14"><path d="M13.2 5v3.600M37.4 5v3.600M61.7 5v3.600M86.1 5v3.600M110.4 5v3.600M134.7 5v3.600M159.0 5v3.600M183.2 5v3.600M207.6 5v3.600M231.8 5v3.600M256.1 5v3.600M280.4 5v3.600M304.8 5v3.600M329.0 5v3.600M353.4 5v3.600M377.6 5v3.600M401.9 5v3.600M426.2 5v3.600" stroke="#444" stroke-width="1.100" fill="none"/><rect x="7.0" y="6.400" width="1.200" height="1.200" fill="#555"/><rect x="18.1" y="6.400" width="1.200" height="1.200" fill="#555"/><rect x="31.3" y="6.400" width="1.200" height="1.200" fill="#555"/><rect x="42.4" y="6.400" width="1.200" height="1.200" fill="#555"/><rect x="55.6" y="6.400" width="1.200" height="1.200" fill="#555"/><rect x="66.7" y="6.400" width="1.200" height="1.200" fill="#555"/><rect x="79.9" y="6.400" width="1.200" height="1.200" fill="#555"/><rect x="91.0" y="6.400" width="1.200" height="1.200" fill="#555"/><rect x="104.2" y="6.400" width="1.200" height="1.200" fill="#555"/><rect x="115.3" y="6.400" width="1.200" height="1.200" fill="#555"/><rect x="128.5" y="6.400" width="1.200" height="1.200" fill="#555"/><rect x="139.6" y="6.400" width="1.200" height="1.200" fill="#555"/><rect x="152.8" y="6.400" width="1.200" height="1.200" fill="#555"/><rect x="163.9" y="6.400" width="1.200" height="1.200" fill="#555"/><rect x="177.1" y="6.400" width="1.200" height="1.200" fill="#555"/><rect x="188.2" y="6.400" width="1.200" height="1.200" fill="#555"/><rect x="201.4" y="6.400" width="1.200" height="1.200" fill="#555"/><rect x="212.5" y="6.400" width="1.200" height="1.200" fill="#555"/><rect x="225.7" y="6.400" width="1.200" height="1.200" fill="#555"/><rect x="236.8" y="6.400" width="1.200" height="1.200" fill="#555"/><rect x="250.0" y="6.400" width="1.200" height="1.200" fill="#555"/><rect x="261.1" y="6.400" width="1.200" height="1.200" fill="#555"/><rect x="274.3" y="6.400" width="1.200" height="1.200" fill="#555"/><rect x="285.4" y="6.400" width="1.200" height="1.200" fill="#555"/><rect x="298.6" y="6.400" width="1.200" height="1.200" fill="#555"/><rect x="309.7" y="6.400" width="1.200" height="1.200" fill="#555"/><rect x="322.9" y="6.400" width="1.200" height="1.200" fill="#555"/><rect x="334.0" y="6.400" width="1.200" height="1.200" fill="#555"/><rect x="347.2" y="6.400" width="1.200" height="1.200" fill="#555"/><rect x="358.3" y="6.400" width="1.200" height="1.200" fill="#555"/><rect x="371.5" y="6.400" width="1.200" height="1.200" fill="#555"/><rect x="382.6" y="6.400" width="1.200" height="1.200" fill="#555"/><rect x="395.8" y="6.400" width="1.200" height="1.200" fill="#555"/><rect x="406.9" y="6.400" width="1.200" height="1.200" fill="#555"/><rect x="420.1" y="6.400" width="1.200" height="1.200" fill="#555"/></svg>
</div>
<div class="abs" style="left:396px;top:144px;width:0;height:14px;border-left:1.500px dotted #c0392b"></div>

<div id="work"><div id="slide"></div></div>
<div id="vscroll"></div>
<svg style="left:439px;top:145px" width="8" height="6" viewBox="0 0 8 6"><path d="M4 .4L7.800 5.600H.2z" fill="#6b6b6b"/></svg>
<div class="abs" style="left:439px;top:744px;width:8px;height:15px;background:#767676;border-radius:4px"></div>
<div class="abs" style="left:32px;top:264px;width:24px;height:24px;background:#fdfdfd;border:1px solid #5f5f5f"></div>
<div class="abs" style="left:32px;top:297px;width:24px;height:24px;background:#fdfdfd;border:1px solid #5f5f5f"></div>
<div class="abs" style="left:32px;top:329px;width:24px;height:24px;background:#fdfdfd;border:1px solid #5f5f5f"></div>
<svg style="left:32px;top:264px" width="24" height="24" viewBox="0 0 24 24"><path d="M11.500 3v17.800M2.600 12h17.800" stroke="#2ea44f" stroke-width="1.300"/></svg>
<svg style="left:32px;top:297px" width="24" height="24" viewBox="0 0 24 24"><path d="M19.500 3c.7-.6 1.700.2 1.200 1L12.300 15.500 10 13.700z" fill="#fff" stroke="#333" stroke-width="1.100" stroke-linejoin="round"/><path d="M10 13.700l2.300 1.800c-.2 2.400-2.400 3.900-5.300 3.800-1.900 0-3.500-.3-4.600-.8 2.400-.4 3.100-1.600 4.100-3.100 1-1.400 2.200-1.900 3.500-1.700z" fill="#8fc3f2" stroke="#1f6fc5" stroke-width="1" stroke-linejoin="round"/></svg>
<svg style="left:32px;top:329px" width="24" height="24" viewBox="0 0 24 24"><path d="M2.200 3.600H20v2l-7.100 7.100v8.700H9.200v-8.700L2.200 5.600z" fill="#f4f4f4" stroke="#333" stroke-width="1.200" stroke-linejoin="round"/></svg>
<svg style="left:0;top:157px" width="436" height="606" viewBox="0 157 436 606" font-family="'Liberation Sans','Noto Sans CJK KR',sans-serif"><rect x="68.700" y="265.600" width="362.300" height="442.600" fill="none" stroke="#404040" stroke-width="1.200"/><path d="M107.5 676.7H420M107.5 636.8H420M107.5 596.9H420M107.5 557.0H420M107.5 517.1H420M107.5 477.2H420M107.5 437.3H420M107.5 397.4H420M107.5 357.5H420M107.5 317.6H420M107.5 277.7H420" stroke="#dcdcdc" stroke-width="1" fill="none"/><text x="96.500" y="680.3" text-anchor="end" font-size="10" fill="#4f4f4f">0만</text><text x="96.500" y="640.4" text-anchor="end" font-size="10" fill="#4f4f4f">0.5만</text><text x="96.500" y="600.5" text-anchor="end" font-size="10" fill="#4f4f4f">1만</text><text x="96.500" y="560.6" text-anchor="end" font-size="10" fill="#4f4f4f">1.5만</text><text x="96.500" y="520.7" text-anchor="end" font-size="10" fill="#4f4f4f">2만</text><text x="96.500" y="480.8" text-anchor="end" font-size="10" fill="#4f4f4f">2.5만</text><text x="96.500" y="440.9" text-anchor="end" font-size="10" fill="#4f4f4f">3만</text><text x="96.500" y="401.0" text-anchor="end" font-size="10" fill="#4f4f4f">3.5만</text><text x="96.500" y="361.1" text-anchor="end" font-size="10" fill="#4f4f4f">4만</text><text x="96.500" y="321.2" text-anchor="end" font-size="10" fill="#4f4f4f">4.5만</text><text x="96.500" y="281.3" text-anchor="end" font-size="10" fill="#4f4f4f">5만</text><rect x="121" y="333.6" width="52" height="343.1" fill="#12766b"/><text x="147" y="697.300" text-anchor="middle" font-size="10.500" fill="#4f4f4f">1분기</text><rect x="199" y="477.2" width="52" height="199.5" fill="#12766b"/><text x="225" y="697.300" text-anchor="middle" font-size="10.500" fill="#4f4f4f">2분기</text><rect x="277" y="397.4" width="52" height="279.3" fill="#ff6496"/><text x="303" y="697.300" text-anchor="middle" font-size="10.500" fill="#4f4f4f">3분기</text><rect x="355" y="317.6" width="52" height="359.1" fill="#12766b"/><text x="381" y="697.300" text-anchor="middle" font-size="10.500" fill="#4f4f4f">4분기</text><rect x="130" y="336.3" width="34" height="42" fill="none" stroke="#8c8c8c" stroke-width=".8"/><text x="147" y="351.4" text-anchor="middle" font-size="13" font-weight="500" fill="#fff" stroke="#fff" stroke-width=".4" letter-spacing="-.45">1분기</text><text x="147" y="371.6" text-anchor="middle" font-size="13" font-weight="500" fill="#fff" stroke="#fff" stroke-width=".4" letter-spacing="-.45">4.3만</text><circle cx="130" cy="336.3" r="2.100" fill="#fff" stroke="#2f8dff" stroke-width="1.300"/><circle cx="130" cy="378.3" r="2.100" fill="#fff" stroke="#2f8dff" stroke-width="1.300"/><circle cx="164" cy="336.3" r="2.100" fill="#fff" stroke="#2f8dff" stroke-width="1.300"/><circle cx="164" cy="378.3" r="2.100" fill="#fff" stroke="#2f8dff" stroke-width="1.300"/><rect x="208" y="479.9" width="34" height="42" fill="none" stroke="#8c8c8c" stroke-width=".8"/><text x="225" y="495.0" text-anchor="middle" font-size="13" font-weight="500" fill="#fff" stroke="#fff" stroke-width=".4" letter-spacing="-.45">2분기</text><text x="225" y="515.2" text-anchor="middle" font-size="13" font-weight="500" fill="#fff" stroke="#fff" stroke-width=".4" letter-spacing="-.45">2.5만</text><circle cx="208" cy="479.9" r="2.100" fill="#fff" stroke="#2f8dff" stroke-width="1.300"/><circle cx="208" cy="521.9" r="2.100" fill="#fff" stroke="#2f8dff" stroke-width="1.300"/><circle cx="242" cy="479.9" r="2.100" fill="#fff" stroke="#2f8dff" stroke-width="1.300"/><circle cx="242" cy="521.9" r="2.100" fill="#fff" stroke="#2f8dff" stroke-width="1.300"/><rect x="286" y="400.1" width="34" height="42" fill="none" stroke="#8c8c8c" stroke-width=".8"/><text x="303" y="415.2" text-anchor="middle" font-size="13" font-weight="500" fill="#fff" stroke="#fff" stroke-width=".4" letter-spacing="-.45">3분기</text><text x="303" y="435.4" text-anchor="middle" font-size="13" font-weight="500" fill="#fff" stroke="#fff" stroke-width=".4" letter-spacing="-.45">3.5만</text><circle cx="286" cy="400.1" r="2.100" fill="#fff" stroke="#2f8dff" stroke-width="1.300"/><circle cx="286" cy="442.1" r="2.100" fill="#fff" stroke="#2f8dff" stroke-width="1.300"/><circle cx="320" cy="400.1" r="2.100" fill="#fff" stroke="#2f8dff" stroke-width="1.300"/><circle cx="320" cy="442.1" r="2.100" fill="#fff" stroke="#2f8dff" stroke-width="1.300"/><rect x="364" y="320.3" width="34" height="42" fill="none" stroke="#8c8c8c" stroke-width=".8"/><text x="381" y="335.4" text-anchor="middle" font-size="13" font-weight="500" fill="#fff" stroke="#fff" stroke-width=".4" letter-spacing="-.45">4분기</text><text x="381" y="355.6" text-anchor="middle" font-size="13" font-weight="500" fill="#fff" stroke="#fff" stroke-width=".4" letter-spacing="-.45">4.5만</text><circle cx="364" cy="320.3" r="2.100" fill="#fff" stroke="#2f8dff" stroke-width="1.300"/><circle cx="364" cy="362.3" r="2.100" fill="#fff" stroke="#2f8dff" stroke-width="1.300"/><circle cx="398" cy="320.3" r="2.100" fill="#fff" stroke="#2f8dff" stroke-width="1.300"/><circle cx="398" cy="362.3" r="2.100" fill="#fff" stroke="#2f8dff" stroke-width="1.300"/><circle cx="68.7" cy="265.6" r="4.300" fill="#fff" stroke="#333" stroke-width="1.400"/><circle cx="250" cy="265.6" r="4.300" fill="#fff" stroke="#333" stroke-width="1.400"/><circle cx="431" cy="265.6" r="4.300" fill="#fff" stroke="#333" stroke-width="1.400"/><circle cx="68.7" cy="487" r="4.300" fill="#fff" stroke="#333" stroke-width="1.400"/><circle cx="431" cy="487" r="4.300" fill="#fff" stroke="#333" stroke-width="1.400"/><circle cx="68.7" cy="708.2" r="4.300" fill="#fff" stroke="#333" stroke-width="1.400"/><circle cx="250" cy="708.2" r="4.300" fill="#fff" stroke="#333" stroke-width="1.400"/><circle cx="431" cy="708.2" r="4.300" fill="#fff" stroke="#333" stroke-width="1.400"/></svg>

<div id="pane"></div>
<div class="abs" style="left:464.500px;top:153px;font-size:19.800px;line-height:24px;color:#a2330f;font-weight:350;white-space:nowrap">데이터 레이블 서식</div>
<svg style="left:1226px;top:158.500px" width="9" height="5" viewBox="0 0 9 5"><path d="M0 0h8.600L4.300 4.800z" fill="#5c5c5c"/></svg>
<svg style="left:1261px;top:156.500px" width="9" height="9" viewBox="0 0 9 9"><path d="M.7.7l7.600 7.600M8.300.7L.7 8.300" stroke="#333" stroke-width="1.400"/></svg>
<div class="pt" style="left:468px;top:189px;font-weight:700;font-size:11.200px;color:#1f1f1f">레이블 옵션</div>
<svg style="left:529.500px;top:194.500px" width="9" height="5" viewBox="0 0 9 5"><path d="M.5.5L4.300 4.200 8.100.5" fill="none" stroke="#1a7fd4" stroke-width="1.200"/></svg>
<div class="pt" style="left:553px;top:189px;font-weight:500;color:#333">텍스트 옵션</div>
<!-- icon row -->
<svg style="left:469px;top:214px" width="22" height="22" viewBox="0 0 22 22"><path d="M8.700 3.300L1.300 10.800l7.600 8.600 7.600-7.300z" fill="#fff" stroke="#333" stroke-width="1.200" stroke-linejoin="round"/><path d="M8.300 9V3.300c0-1.500 1.200-2.300 2.300-2.300s2.100.8 2.100 2.100v1.600" fill="none" stroke="#555" stroke-width="1"/><circle cx="8.300" cy="9.500" r="1" fill="#333"/><path d="M13.500 6.200c3.500.6 6.600 3.300 6.700 7.800.1 2-.6 3.600-1.400 4.400-.3-2.600-1-4.700-2.600-6.100z" fill="#5a5a5a"/></svg>
<svg style="left:506px;top:215px" width="19" height="21" viewBox="0 0 19 21"><path d="M9.500 1L17.700 7.300l-3.100 9.500H4.400L1.300 7.300z" fill="#fff" stroke="#333" stroke-width="1.200" stroke-linejoin="round"/><path d="M4.400 16.800L2.600 20.300M14.600 16.800L16.400 20.300" fill="none" stroke="#a9a9a9" stroke-width="1.100"/></svg>
<svg style="left:541.500px;top:216px" width="20" height="20" viewBox="0 0 20 20"><path d="M5.500 2.200h12.400M5.500.5v3.400M17.900.5v3.400M2.200 6v12.600M.5 6h3.400M.5 18.600h3.400" fill="none" stroke="#555" stroke-width="1.100"/><rect x="5.500" y="6" width="12.600" height="12.600" rx="1" fill="#5f5f5f"/><path d="M11.800 8v8.600M7.500 12.300h8.600M10.300 9.600l1.500-1.600 1.500 1.600M10.300 15l1.500 1.600 1.500-1.600M9.100 10.800l-1.600 1.500 1.600 1.500M14.500 10.800l1.600 1.500-1.600 1.500" fill="none" stroke="#fff" stroke-width="1.300"/></svg>
<div class="abs" style="left:573px;top:212px;width:28px;height:28px;background:#fff;border:1px solid #5a5a5a;border-radius:5px"></div>
<svg style="left:573px;top:212px" width="28" height="28" viewBox="0 0 28 28"><path d="M6 9.700h5v12.300H6zM12 4h5.200v18H12zM18.300 7.300h4.700v14.700h-4.700z" fill="#d04423"/></svg>
<svg style="left:464px;top:245px" width="810" height="9" viewBox="0 0 810 9"><path d="M0 7.500h116.500l6-6.200 6 6.200H808" fill="none" stroke="#d3d3d3" stroke-width="1"/></svg>
<!-- section -->
<svg style="left:470.500px;top:263px" width="9" height="6" viewBox="0 0 9 6"><path d="M.6.700L4.200 4.400 7.800.7" fill="none" stroke="#222" stroke-width="1.200"/></svg>
<div class="pt" style="left:484px;top:258.500px;font-weight:700;color:#1f1f1f">레이블 옵션</div>
<div class="pt" style="left:483.500px;top:278.800px;color:#444">레이블 내용</div>
<div class="cb" style="top:298px"></div><div class="pt" style="left:507.300px;top:297px">셀 값<span class="ak">(<u>F</u>)</span></div>
<div class="cb" style="top:319.400px"></div><div class="pt" style="left:507.300px;top:318.400px">계열 이름<span class="ak">(<u>S</u>)</span></div>
<div class="cb on" style="top:340.800px"></div><div class="pt" style="left:507.300px;top:339.800px">항목 이름<span class="ak">(<u>G</u>)</span></div>
<div class="cb on" style="top:362.200px"></div><div class="pt" style="left:507.300px;top:361.200px">값<span class="ak">(<u>V</u>)</span></div>
<div class="cb" style="top:383.500px"></div><div class="pt" style="left:507.300px;top:382.500px">지시선 표시<span class="ak">(<u>H</u>)</span></div>
<div class="cb" style="top:404.800px"></div><div class="pt" style="left:507.300px;top:403.800px">범례 표지<span class="ak">(<u>L</u>)</span></div>
<svg style="left:493px;top:343.500px" width="8" height="6" viewBox="0 0 8 6"><path d="M.8 3l2.100 2.100L7 .9" fill="none" stroke="#fff" stroke-width="1.300"/></svg>
<svg style="left:493px;top:364.900px" width="8" height="6" viewBox="0 0 8 6"><path d="M.8 3l2.100 2.100L7 .9" fill="none" stroke="#fff" stroke-width="1.300"/></svg>
<div class="pt" style="left:491.500px;top:429px;color:#333">구분 기호<span class="ak">(<u>E</u>)</span></div>
<div class="abs" style="left:1177px;top:426px;width:78px;height:19px;background:#fff;border:2px solid #111;border-radius:4.500px"></div>
<div class="pt" style="left:1186px;top:428px;color:#222">(줄 바꿈)</div>
<svg style="left:1245px;top:433px" width="6" height="4" viewBox="0 0 6 4"><path d="M.6.6L3 3 5.400.6" fill="none" stroke="#222" stroke-width="1.100"/></svg>
<div class="abs" style="left:491.500px;top:450px;width:137px;height:20px;background:#fff;border:1px solid #e2e2e2;border-radius:4px"></div>
<div class="pt" style="left:499.500px;top:452.700px;color:#222">레이블 텍스트 원래대로<span class="ak">(<u>R</u>)</span></div>
<div class="pt" style="left:483.500px;top:476px;color:#444">레이블 위치</div>
<div class="rd" style="top:502.300px"></div><div class="pt" style="left:507.300px;top:501.500px">가운데<span class="ak">(<u>C</u>)</span></div>
<div class="rd" style="top:521.900px"></div><div class="pt" style="left:507.300px;top:521px">안쪽 끝에<span class="ak">(<u>I</u>)</span></div>
<div class="abs" style="left:494.200px;top:524.500px;width:4.800px;height:4.800px;border-radius:50%;background:#111"></div>
<div class="rd" style="top:541.500px"></div><div class="pt" style="left:507.300px;top:540.600px">축에 가깝게<span class="ak">(<u>D</u>)</span></div>
<div class="rd" style="top:561.300px"></div><div class="pt" style="left:507.300px;top:560.400px">바깥쪽 끝에<span class="ak">(<u>O</u>)</span></div>
<svg style="left:472.500px;top:592.500px" width="6" height="9" viewBox="0 0 6 9"><path d="M.8.700L4.500 4.300.8 7.900" fill="none" stroke="#222" stroke-width="1.200"/></svg>
<div class="pt" style="left:484px;top:589px;font-weight:700;color:#1f1f1f">표시 형식</div>

</body>
</html>
